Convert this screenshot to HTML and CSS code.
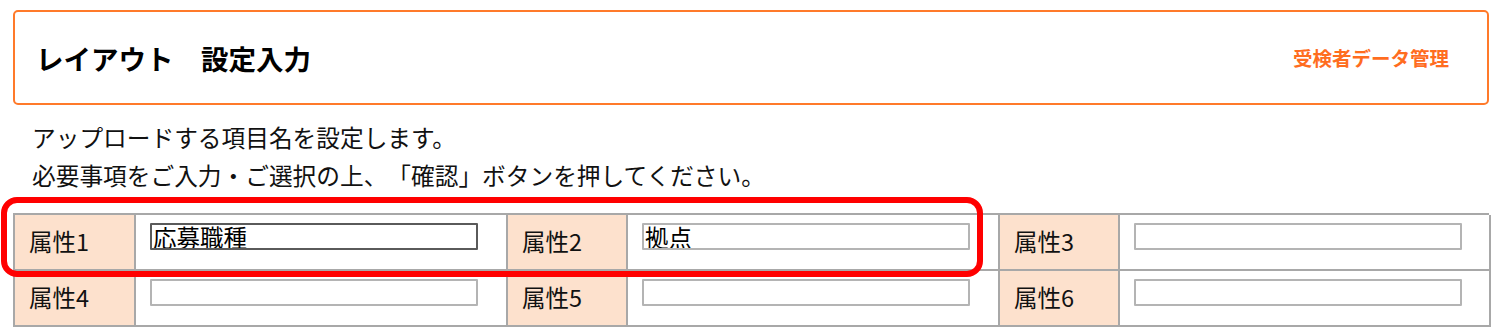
FILE: index.html
```html
<!DOCTYPE html>
<html lang="ja">
<head>
<meta charset="utf-8">
<link rel="stylesheet" href="styles.css">
</head>
<body>
<div class="page">
  <header class="head">
    <h1 class="title">レイアウト　設定入力</h1>
    <a class="link" href="#">受検者データ管理</a>
  </header>
  <div class="desc">
    <p>アップロードする項目名を設定します。</p>
    <p>必要事項をご入力・ご選択の上、「確認」ボタンを押してください。</p>
  </div>
  <div class="grid">
    <div class="lab">属性1</div>
    <div class="val"><input class="inp filled" type="text" value="応募職種"></div>
    <div class="lab">属性2</div>
    <div class="val"><input class="inp" type="text" value="拠点"></div>
    <div class="lab">属性3</div>
    <div class="val"><input class="inp" type="text" value=""></div>
    <div class="lab">属性4</div>
    <div class="val"><input class="inp" type="text" value=""></div>
    <div class="lab">属性5</div>
    <div class="val"><input class="inp" type="text" value=""></div>
    <div class="lab">属性6</div>
    <div class="val"><input class="inp" type="text" value=""></div>
  </div>
  <div class="mark"></div>
</div>
</body>
</html>
```
FILE: styles.css
```css
* { box-sizing: border-box; }
html, body { margin: 0; padding: 0; background: #fff; }
body {
  font-family: "Noto Sans CJK JP", "Noto Sans", sans-serif;
  color: #111;
  overflow: hidden;
  text-spacing-trim: space-all;
}
.page {
  position: relative;
  padding: 10px 11px 0 13px;
  width: 1500px;
}
.head {
  height: 95px;
  border: 2px solid #ff7a2a;
  border-radius: 5px;
  display: flex;
  align-items: center;
  justify-content: space-between;
  padding: 0 38px 0 21px;
}
.title {
  margin: 0;
  font-size: 27.5px;
  font-weight: 700;
  color: #000;
  line-height: 1;
  position: relative;
  top: 1px;
}
.link {
  font-size: 19.5px;
  font-weight: 700;
  color: #ff6d1f;
  text-decoration: none;
  line-height: 1;
}
.desc {
  margin-top: 13px;
  padding-left: 19px;
  font-size: 23.7px;
  line-height: 38px;
  color: #111;
}
.desc p { margin: 0; }
.grid {
  margin-top: 19px;
  display: grid;
  grid-template-columns: 121px 372px 120px 372px 120px 371px;
  grid-auto-rows: 56px;
  border-top: 2px solid #a8a8a8;
  border-left: 2px solid #a8a8a8;
  width: 1476px;
}
.lab, .val {
  border-right: 2px solid #a8a8a8;
  border-bottom: 2px solid #a8a8a8;
}
.lab {
  background: #fde1cd;
  font-size: 23.5px;
  padding: 0 0 3px 14px;
  display: flex;
  align-items: center;
  color: #111;
}
.val {
  background: #fff;
  padding: 8px 0 0 14px;
}
.inp {
  display: block;
  width: 328px;
  height: 27px;
  border: 2px solid #b4b4b4;
  border-radius: 1px;
  padding: 0 1px;
  font-family: "Noto Sans CJK JP", sans-serif;
  font-size: 23.5px;
  line-height: 23px;
  color: #000;
  background: #fff;
  outline: none;
}
.inp.filled { border-color: #5a5a5a; }
.mark {
  position: absolute;
  left: 1px;
  top: 197px;
  width: 982px;
  height: 80px;
  border: 6px solid #ff0000;
  border-radius: 16px;
  pointer-events: none;
}
```
